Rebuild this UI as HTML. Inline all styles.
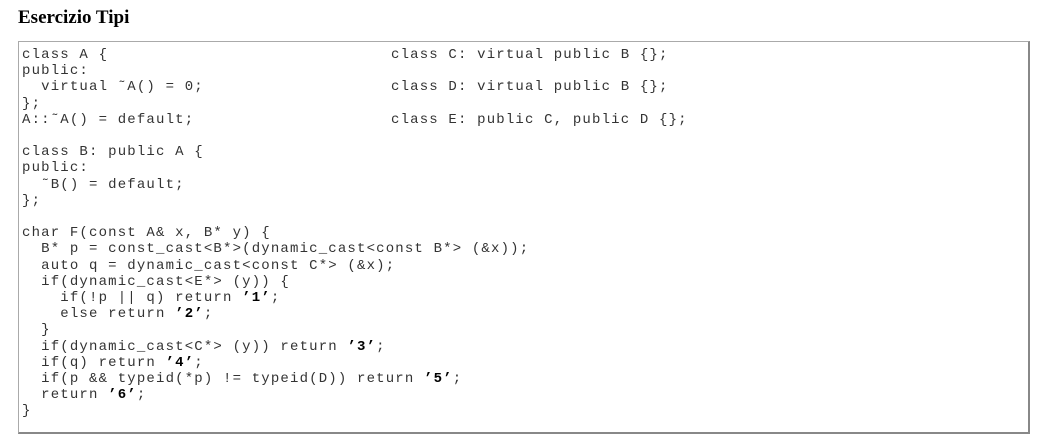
<!DOCTYPE html>
<html><head><style>
body{margin:0;background:#fff;width:1037px;height:437px;overflow:hidden;position:relative}
h1{position:absolute;left:18px;top:7px;margin:0;font:bold 19px "Liberation Serif",serif;color:#000}
.box{position:absolute;left:18px;top:41px;width:1009px;height:390px;border:1px solid #888;border-right:2px solid #888;border-bottom:2px solid #888;border-top-color:#aaa;border-left-color:#aaa}
pre{position:absolute;margin:0;font:14px/16.2px "Liberation Mono",monospace;color:#333;letter-spacing:1.17px}
b{color:#000}
</style></head><body>
<h1>Esercizio Tipi</h1>
<div class="box"></div>
<pre style="left:22px;top:47px">class A {
public:
  virtual ˜A() = 0;
};
A::˜A() = default;

class B: public A {
public:
  ˜B() = default;
};

char F(const A&amp; x, B* y) {
  B* p = const_cast&lt;B*&gt;(dynamic_cast&lt;const B*&gt; (&amp;x));
  auto q = dynamic_cast&lt;const C*&gt; (&amp;x);
  if(dynamic_cast&lt;E*&gt; (y)) {
    if(!p || q) return <b>’1’</b>;
    else return <b>’2’</b>;
  }
  if(dynamic_cast&lt;C*&gt; (y)) return <b>’3’</b>;
  if(q) return <b>’4’</b>;
  if(p &amp;&amp; typeid(*p) != typeid(D)) return <b>’5’</b>;
  return <b>’6’</b>;
}</pre>
<pre style="left:391px;top:47px">class C: virtual public B {};

class D: virtual public B {};

class E: public C, public D {};</pre>
</body></html>
